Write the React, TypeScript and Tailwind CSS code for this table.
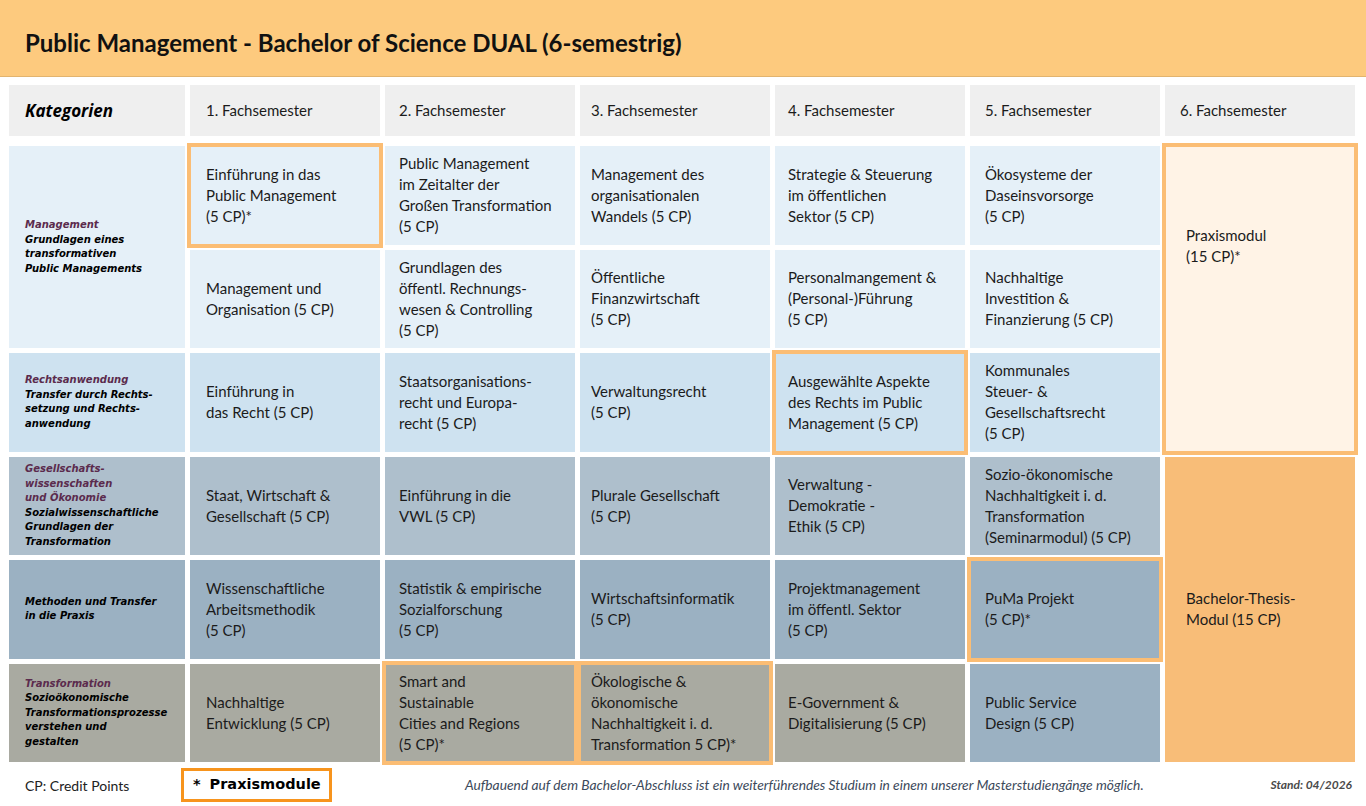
import React from 'react';

type Cell = { text: string; hl?: boolean; bg?: string };
type Row = { bg: string; cells: Cell[] };

const pad = ['pl-[16px]', 'pl-[14px]', 'pl-[11px]', 'pl-[13px]', 'pl-[15px]'];

const MGMT = 'bg-[#e5f0f8]';
const RECHT = 'bg-[#cee2f0]';
const GESELL = 'bg-[#aebfcc]';
const METH = 'bg-[#9bb1c2]';
const TRANS = 'bg-[#a9aaa1]';

const rows: Row[] = [
  {
    bg: MGMT,
    cells: [
      { text: 'Einführung in das\nPublic Management\n(5 CP)*', hl: true },
      { text: 'Public Management\nim Zeitalter der\nGroßen Transformation\n(5 CP)' },
      { text: 'Management des\norganisationalen\nWandels (5 CP)' },
      { text: 'Strategie & Steuerung\nim öffentlichen\nSektor (5 CP)' },
      { text: 'Ökosysteme der\nDaseinsvorsorge\n(5 CP)' },
    ],
  },
  {
    bg: MGMT,
    cells: [
      { text: 'Management und\nOrganisation (5 CP)' },
      { text: 'Grundlagen des\nöffentl. Rechnungs-\nwesen & Controlling\n(5 CP)' },
      { text: 'Öffentliche\nFinanzwirtschaft\n(5 CP)' },
      { text: 'Personalmangement &\n(Personal-)Führung\n(5 CP)' },
      { text: 'Nachhaltige\nInvestition &\nFinanzierung (5 CP)' },
    ],
  },
  {
    bg: RECHT,
    cells: [
      { text: 'Einführung in\ndas Recht (5 CP)' },
      { text: 'Staatsorganisations-\nrecht und Europa-\nrecht (5 CP)' },
      { text: 'Verwaltungsrecht\n(5 CP)' },
      { text: 'Ausgewählte Aspekte\ndes Rechts im Public\nManagement (5 CP)', hl: true },
      { text: 'Kommunales\nSteuer- &\nGesellschaftsrecht\n(5 CP)' },
    ],
  },
  {
    bg: GESELL,
    cells: [
      { text: 'Staat, Wirtschaft &\nGesellschaft (5 CP)' },
      { text: 'Einführung in die\nVWL (5 CP)' },
      { text: 'Plurale Gesellschaft\n(5 CP)' },
      { text: 'Verwaltung -\nDemokratie -\nEthik  (5 CP)' },
      { text: 'Sozio-ökonomische\nNachhaltigkeit i. d.\nTransformation\n(Seminarmodul) (5 CP)' },
    ],
  },
  {
    bg: METH,
    cells: [
      { text: 'Wissenschaftliche\nArbeitsmethodik\n(5 CP)' },
      { text: 'Statistik & empirische\nSozialforschung\n (5 CP)' },
      { text: 'Wirtschaftsinformatik\n(5 CP)' },
      { text: 'Projektmanagement\nim öffentl. Sektor\n(5 CP)' },
      { text: 'PuMa Projekt\n(5 CP)*', hl: true },
    ],
  },
  {
    bg: TRANS,
    cells: [
      { text: 'Nachhaltige\nEntwicklung (5 CP)' },
      { text: 'Smart and\nSustainable\nCities and Regions\n(5 CP)*', hl: true },
      { text: 'Ökologische &\nökonomische\nNachhaltigkeit i. d.\nTransformation 5 CP)*', hl: true },
      { text: 'E-Government &\nDigitalisierung (5 CP)' },
      { text: 'Public Service\nDesign (5 CP)', bg: METH },
    ],
  },
];

const catFont = { fontFamily: '"DejaVu Sans", Verdana, sans-serif' };

const Category = ({ bg, span, purple, black }: { bg: string; span?: boolean; purple: string[]; black: string[] }) => (
  <div className={`${bg} ${span ? 'row-span-2' : ''} flex items-center pl-[16px] pr-1`}>
    <div className="text-[10px] leading-[14.5px] font-bold italic whitespace-nowrap" style={catFont}>
      {purple.map((l) => (
        <div key={l} className="text-[#5b2b4d]">{l}</div>
      ))}
      {black.map((l) => (
        <div key={l} className="text-black">{l}</div>
      ))}
    </div>
  </div>
);

export default function App() {
  const cats = [
    <Category key="m" bg={MGMT} span purple={['Management']} black={['Grundlagen eines', 'transformativen', 'Public Managements']} />,
    <Category key="r" bg={RECHT} purple={['Rechtsanwendung']} black={['Transfer durch Rechts-', 'setzung und Rechts-', 'anwendung']} />,
    <Category key="g" bg={GESELL} purple={['Gesellschafts-', 'wissenschaften', 'und Ökonomie']} black={['Sozialwissenschaftliche', 'Grundlagen der', 'Transformation']} />,
    <Category key="me" bg={METH} purple={[]} black={['Methoden und Transfer', 'in die Praxis']} />,
    <Category key="t" bg={TRANS} purple={['Transformation']} black={['Sozioökonomische', 'Transformationsprozesse', 'verstehen und', 'gestalten']} />,
  ];
  const catAt: Record<number, number> = { 0: 0, 2: 1, 3: 2, 4: 3, 5: 4 };

  return (
    <div className="w-[1366px] h-[806px] bg-white overflow-hidden text-[#1b1b1b]" style={{ fontFamily: 'Lato, "Open Sans", sans-serif' }}>
      <div className="h-[77px] bg-[#fdca7e] border-b border-[#e2b46f] flex items-center pl-[25px] pt-[9px]">
        <h1 className="text-[24px] font-bold text-[#111]">Public Management - Bachelor of Science DUAL (6-semestrig)</h1>
      </div>

      <div className="pl-[9px] pt-[8px]">
        <div className="grid grid-cols-[176px_repeat(6,190px)] gap-x-[5px] h-[51px]">
          <div className="bg-[#efefef] flex items-center pl-[16px]">
            <span className="text-[17px] font-bold italic text-black" style={{ fontFamily: '"Open Sans", sans-serif' }}>Kategorien</span>
          </div>
          {['1.', '2.', '3.', '4.', '5.', '6.'].map((n, i) => (
            <div key={n} className={`bg-[#efefef] flex items-center text-[15px] ${i < 5 ? pad[i] : 'pl-[15px]'}`}>
              {n} Fachsemester
            </div>
          ))}
        </div>

        <div className="mt-[10px] grid grid-cols-[176px_repeat(6,190px)] grid-rows-[repeat(6,98.5px)] gap-x-[5px] gap-y-[5px]">
          {rows.map((row, ri) => (
            <React.Fragment key={ri}>
              {catAt[ri] !== undefined && cats[catAt[ri]]}
              {row.cells.map((c, ci) => (
                <div
                  key={ci}
                  className={`${c.bg ?? row.bg} ${pad[ci]} flex items-center text-[15px] leading-[21px] whitespace-pre-line ${
                    c.hl ? 'relative z-10 outline-4 outline-[#fbbd74] -outline-offset-1' : ''
                  }`}
                >
                  <div>{c.text}</div>
                </div>
              ))}
              {ri === 0 && (
                <div className="row-span-3 bg-[#fff3e6] relative z-10 outline-4 outline-[#fbbd74] -outline-offset-1 pl-[21px] pt-[79px] text-[15px] leading-[21px]">
                  Praxismodul
                  <br />
                  (15 CP)*
                </div>
              )}
              {ri === 3 && (
                <div className="row-span-3 bg-[#f8bd78] flex items-center pl-[21px] text-[15px] leading-[21px]">
                  <div>
                    Bachelor-Thesis-
                    <br />
                    Modul (15 CP)
                  </div>
                </div>
              )}
            </React.Fragment>
          ))}
        </div>
      </div>

      <div className="flex items-center pl-[25px] mt-[6px] h-[34px]">
        <span className="w-[156px] text-[14px] text-[#222]">CP: Credit Points</span>
        <div
          className="w-[151px] h-[34px] border-[3px] border-[#f7941d] flex items-center pl-[9px] text-[14.5px] font-bold text-black"
          style={catFont}
        >
          <span className="mr-[9px]">*</span>Praxismodule
        </div>
        <span className="ml-[133px] text-[13.8px] italic text-[#3c4a5b]">
          Aufbauend auf dem Bachelor-Abschluss ist ein weiterführendes Studium in einem unserer Masterstudiengänge möglich.
        </span>
        <span className="ml-auto mr-[14px] text-[12px] italic font-bold text-[#4a4a4a]">Stand: 04/2026</span>
      </div>
    </div>
  );
}
